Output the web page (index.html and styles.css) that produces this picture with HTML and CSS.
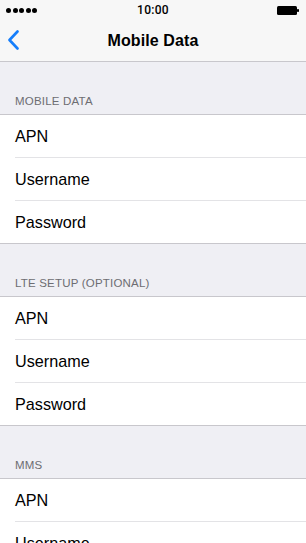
FILE: index.html
```html
<!DOCTYPE html>
<html lang="en">
  <head>
    <meta charset="UTF-8" />
    <meta name="viewport" content="width=device-width, initial-scale=1" />
    <title>Mobile Data</title>
    <link rel="stylesheet" href="styles.css">
  </head>
  <body>
    <header class="top">
      <div class="status-bar">
        <div class="signal">
          <span></span><span></span><span></span><span></span><span></span>
        </div>
        <div class="clock">10:00</div>
        <div class="battery">
          <svg width="23" height="9" viewBox="0 0 23 9">
            <rect x="0" y="0" width="20" height="9" rx="1.5" fill="#000000" />
            <rect x="20" y="3" width="2" height="3" rx="0.8" fill="#000000" />
          </svg>
        </div>
      </div>
      <nav class="nav-bar">
        <a class="back" href="#">
          <svg width="13" height="20" viewBox="0 0 13 20">
            <path d="M10.5 1.5 L2.5 10 L10.5 18.5" fill="none" stroke="#157efb" stroke-width="2.6" stroke-linecap="round" stroke-linejoin="round" />
          </svg>
        </a>
        <h1>Mobile Data</h1>
      </nav>
    </header>

    <main class="settings">
      <section class="group">
        <h2>MOBILE DATA</h2>
        <ul>
          <li>APN</li>
          <li>Username</li>
          <li>Password</li>
        </ul>
      </section>

      <section class="group">
        <h2>LTE SETUP (OPTIONAL)</h2>
        <ul>
          <li>APN</li>
          <li>Username</li>
          <li>Password</li>
        </ul>
      </section>

      <section class="group">
        <h2>MMS</h2>
        <ul>
          <li>APN</li>
          <li>Username</li>
        </ul>
      </section>
    </main>
  </body>
</html>
```

FILE: styles.css
```css
/*—— global ——*/
body {
  margin: 0;
  padding: 0;
  width: 306px;
  height: 543px;
  overflow: hidden;
  background: #efeff4;
  font-family: "Liberation Sans", Arial, sans-serif;
  color: #000000;
}

/*—— status + nav ——*/
.top {
  background: #f7f7f7;
  border-bottom: 1px solid #c8c7cc;
}

.status-bar {
  height: 20px;
  display: grid;
  grid-template-columns: 1fr auto 1fr;
  align-items: center;
  padding: 0 6px;
}

.signal {
  display: flex;
  gap: 1.5px;
}
.signal span {
  width: 5px;
  height: 5px;
  border-radius: 50%;
  background: #000000;
}

.clock {
  font-family: Roboto, "Liberation Sans", sans-serif;
  font-size: 12px;
  font-weight: 500;
  letter-spacing: 0.3px;
}

.battery {
  display: flex;
  justify-content: flex-end;
}
.battery svg {
  display: block;
}

.nav-bar {
  height: 41px;
  display: flex;
  align-items: center;
  justify-content: center;
  position: relative;
}

.back {
  position: absolute;
  left: 7px;
  top: 10px;
  display: flex;
}

.nav-bar h1 {
  margin: 0;
  font-size: 16px;
  font-weight: bold;
  letter-spacing: 0.1px;
}

/*—— grouped list ——*/
.group h2 {
  margin: 0;
  height: 52px;
  box-sizing: border-box;
  padding: 0 15px 7px;
  display: flex;
  align-items: flex-end;
  font-size: 11.5px;
  font-weight: normal;
  color: #6d6d72;
  letter-spacing: 0.2px;
}

.group ul {
  list-style: none;
  margin: 0;
  padding: 0 0 0 15px;
  background: #ffffff;
  border-top: 1px solid #c8c7cc;
  border-bottom: 1px solid #c8c7cc;
}

.group li {
  height: 42px;
  display: flex;
  align-items: center;
  font-size: 16.2px;
  border-bottom: 1px solid #e3e3e6;
}
.group li:last-child {
  border-bottom: none;
}
```
